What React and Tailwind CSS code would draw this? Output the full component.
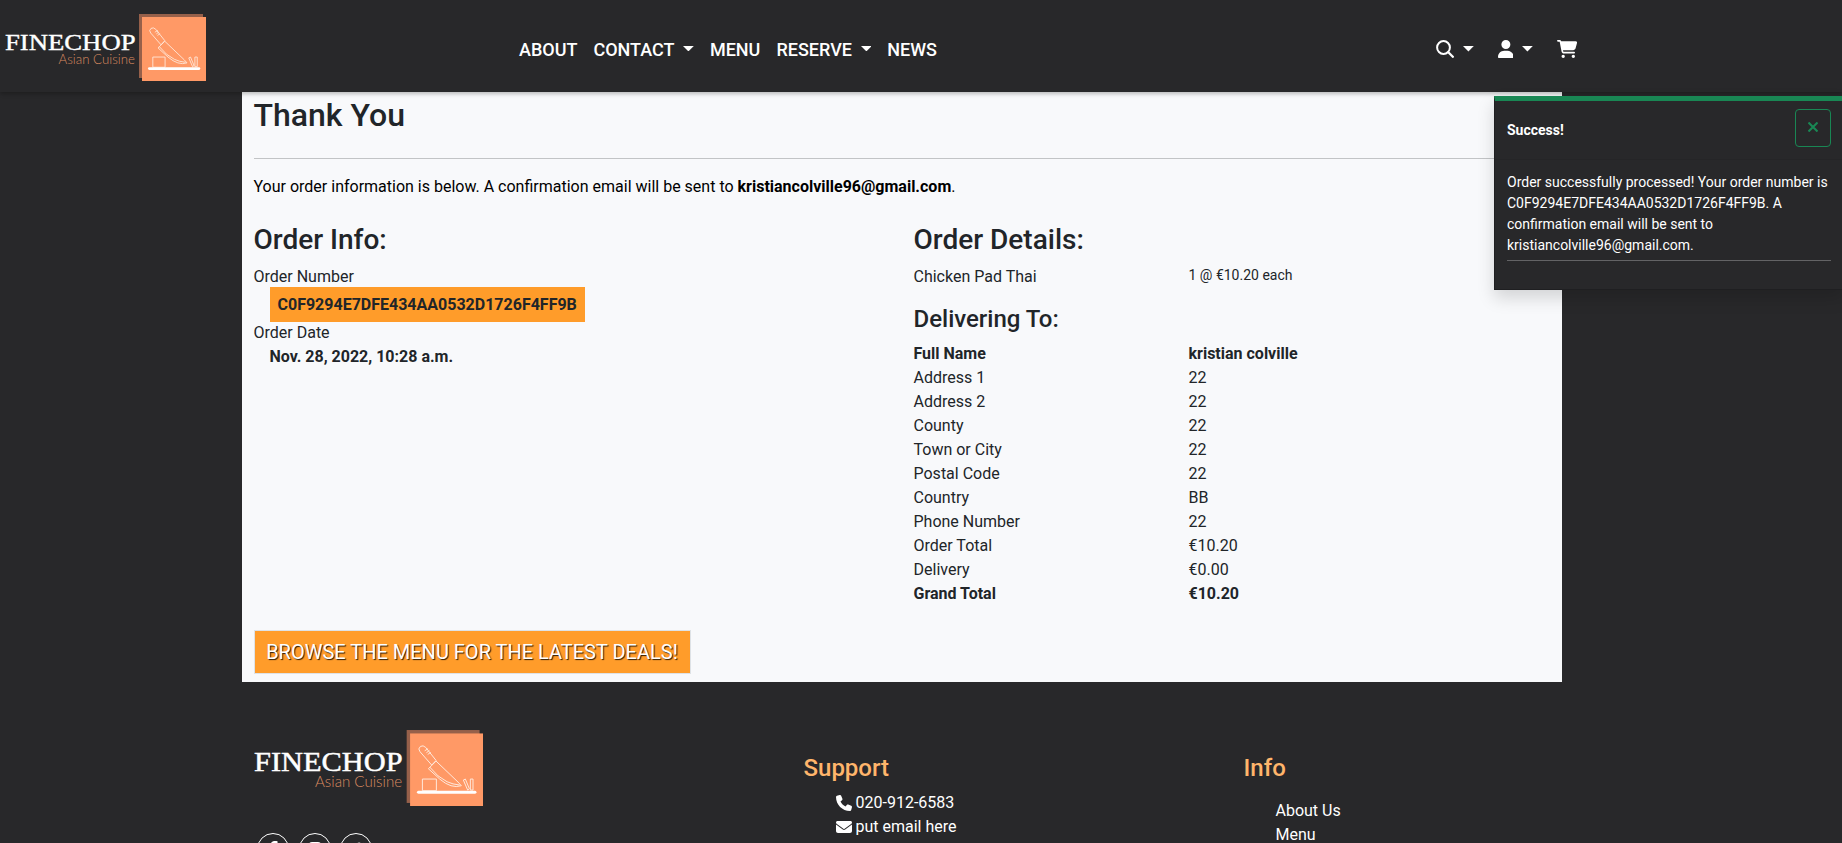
import React from "react";
import {
  FaUser,
  FaCartShopping,
  FaPhone,
  FaEnvelope,
  FaFacebookF,
  FaInstagram,
  FaTwitter,
} from "react-icons/fa6";

function Logo({ className }) {
  return (
    <svg viewBox="0 0 201 67" className={className} role="img" aria-label="Finechop Asian Cuisine">
      <text x="0" y="36" textLength="130.5" lengthAdjust="spacingAndGlyphs" fill="#fff" stroke="#fff" strokeWidth="0.4" fontSize="24" fontFamily="'Liberation Serif', serif">FINECHOP</text>
      <text x="53.5" y="50" textLength="76.5" lengthAdjust="spacingAndGlyphs" fill="#d98a60" fontSize="13.2" fontWeight="300" fontFamily="Lato, sans-serif">Asian Cuisine</text>
      <rect x="134" y="0" width="64" height="64" fill="#96604a" />
      <rect x="137" y="3" width="64" height="64" fill="#ff9966" />
      <svg x="137" y="3" width="64" height="64" viewBox="30 26 219 219" fill="none" stroke="#ffe9dc" strokeWidth="3" strokeLinejoin="round">
        <path d="M60 81 Q52 72 61 65 Q69 60 77 68 L108 107 L95 121 Z" />
        <path d="M74 78 L84 72 M79 84 L88 77 M83 89 L92 83" />
        <path d="M108 109 L174 172 L184 183 Q154 193 119 163 L85 132 Z" />
        <path d="M89 127 Q113 158 141 171 Q158 179 179 181" />
        <rect x="67" y="163" width="42" height="35" />
        <path d="M190 166 L196 163 L208 192 L203 196 Z M211 163 H219 V196 H211 Z" />
        <path d="M55 202.500 H225" stroke="#fff" strokeWidth="9" strokeLinecap="round" />
      </svg>
    </svg>
  );
}

function SearchIcon() {
  return (
    <svg viewBox="0 0 18 18" className="h-[18px] w-[18px]" fill="none" stroke="currentColor" strokeLinecap="round">
      <circle cx="7.5" cy="7.5" r="6.400" strokeWidth="2" />
      <path d="M12.300 12.300 L16.800 16.800" strokeWidth="2.300" />
    </svg>
  );
}

function Caret() {
  return (
    <svg viewBox="0 0 10.8 5.4" className="ml-[8.6px] inline-block h-[5.4px] w-[10.8px] align-[4.5px]" fill="currentColor">
      <path d="M0 0 H10.8 L5.4 5.4 Z" />
    </svg>
  );
}

const links = [
  { label: "About" },
  { label: "Contact", menu: true },
  { label: "Menu" },
  { label: "Reserve", menu: true },
  { label: "News" },
];

const delivery = [
  ["Full Name", "kristian colville", true],
  ["Address 1", "22"],
  ["Address 2", "22"],
  ["County", "22"],
  ["Town or City", "22"],
  ["Postal Code", "22"],
  ["Country", "BB"],
  ["Phone Number", "22"],
  ["Order Total", "€10.20"],
  ["Delivery", "€0.00"],
  ["Grand Total", "€10.20", true],
];

function Header() {
  return (
    <header className="relative z-10 flex h-[92px] items-center bg-[#28282a] text-[18px] text-white shadow-[0_2px_4px_rgba(0,0,0,0.25)]">
      <div className="w-[511px] pt-[3px] pl-[5px]">
        <Logo className="h-[67px] w-[201px]" />
      </div>
      <nav className="mt-[7px] flex font-medium uppercase">
        {links.map((l) => (
          <a key={l.label} className="px-2 leading-[26px]">
            {l.label}
            {l.menu && <Caret />}
          </a>
        ))}
      </nav>
      <div className="mt-[6px] ml-auto flex items-center pr-[265px]">
        <a className="flex items-center">
          <SearchIcon />
          <Caret />
        </a>
        <a className="ml-6 flex items-center">
          <FaUser className="h-[18px] w-[15.75px]" />
          <Caret />
        </a>
        <a className="ml-6">
          <FaCartShopping className="h-[18px] w-[20.25px]" />
        </a>
      </div>
    </header>
  );
}

function Toast() {
  return (
    <aside className="absolute top-[96px] left-[1494px] z-20 h-[194px] w-[350px] border border-t-[5px] border-black/20 border-t-[#198754] bg-[#28282a] text-[14px] leading-[21px] text-white shadow-[0_8px_16px_rgba(0,0,0,0.15)]">
      <div className="flex h-[59px] items-center justify-between border-b border-black/5 px-3">
        <strong className="mt-px font-bold">Success!</strong>
        <button className="-mt-[4px] flex h-[38px] w-9 items-center justify-center rounded-[4px] border border-[#198754] pb-0.5 text-[#198754]">
          <svg viewBox="0 0 10 10" className="h-[10px] w-[10px]" stroke="currentColor" strokeWidth="2.1">
            <path d="M0.500 0.500 L9.500 9.500 M9.500 0.500 L0.500 9.500" />
          </svg>
        </button>
      </div>
      <div className="px-3 pt-3">
        <p>
          Order successfully processed! Your order number is C0F9294E7DFE434AA0532D1726F4FF9B. A confirmation email will be sent to kristiancolville96@gmail.com.
        </p>
        <hr className="mt-1 border-[#636365]" />
      </div>
    </aside>
  );
}

function Order() {
  return (
    <main className="ml-[241.5px] h-[590px] w-[1320px] bg-[#f8f9fb] px-3 pt-1 text-[#212529]">
      <h2 className="text-[32px] leading-[38.4px] font-medium">Thank You</h2>
      <hr className="mt-6 border-[#c2c4c6]" />
      <p className="mt-4 text-black">
        Your order information is below. A confirmation email will be sent to <strong className="font-bold">kristiancolville96@gmail.com</strong>.
      </p>
      <div className="mt-6 grid h-[407px] grid-cols-[660px_1fr]">
        <section>
          <h3 className="text-[28px] leading-[33.6px] font-medium">Order Info:</h3>
          <div className="mt-2">Order Number</div>
          <div className="-mt-[2px] ml-4 flex h-[35px] w-[315px] items-center bg-[#ff9c2a] pl-2 font-bold">C0F9294E7DFE434AA0532D1726F4FF9B</div>
          <div className="-mt-px">Order Date</div>
          <div className="ml-4 font-bold">Nov. 28, 2022, 10:28 a.m.</div>
        </section>
        <section>
          <h3 className="text-[28px] leading-[33.6px] font-medium">Order Details:</h3>
          <div className="mt-2 grid grid-cols-[275px_1fr]">
            <span>Chicken Pad Thai</span>
            <span className="text-[14px] leading-[21px]">1 @ €10.20 each</span>
          </div>
          <h4 className="mt-4 mb-2 text-[24px] leading-[28.8px] font-medium">Delivering To:</h4>
          {delivery.map(([k, v, bold]) => (
            <div key={k} className={bold ? "grid grid-cols-[275px_1fr] font-bold" : "grid grid-cols-[275px_1fr]"}>
              <span>{k}</span>
              <span>{v}</span>
            </div>
          ))}
        </section>
      </div>
      <a className="inline-flex h-11 w-[437px] items-center justify-center border border-[#dee2e6] bg-[#ff9c2a] text-[20px] whitespace-nowrap text-white uppercase [text-shadow:1px_1px_1px_rgba(0,0,0,0.85)]">
        Browse the menu for the latest deals!
      </a>
    </main>
  );
}

function Footer() {
  return (
    <footer className="grid grid-cols-[550px_440px_1fr] pl-[253.5px] text-white">
      <div className="pt-12">
        <Logo className="h-[76.400px] w-[229px]" />
        <div className="mt-[27px] flex gap-[9.500px] pl-[3.5px]">
          {[FaFacebookF, FaInstagram, FaTwitter].map((Icon, i) => (
            <a key={i} className="flex h-8 w-8 shrink-0 items-center justify-center rounded-full border border-white">
              <Icon className="h-4 w-4" />
            </a>
          ))}
        </div>
      </div>
      <div className="pt-[72px]">
        <h4 className="text-[24px] leading-[28.8px] font-medium text-[#ffb56b]">Support</h4>
        <ul className="mt-2 pl-8">
          <li className="flex items-center gap-1">
            <FaPhone className="h-4 w-4" />
            020-912-6583
          </li>
          <li className="flex items-center gap-1">
            <FaEnvelope className="h-4 w-4" />
            put email here
          </li>
        </ul>
      </div>
      <div className="pt-[72px]">
        <h4 className="text-[24px] leading-[28.8px] font-medium text-[#ffb56b]">Info</h4>
        <ul className="mt-4 pl-8">
          <li>About Us</li>
          <li>Menu</li>
        </ul>
      </div>
    </footer>
  );
}

export default function App() {
  return (
    <div className="relative h-[843px] w-[1842px] overflow-hidden bg-[#28282a] font-[Roboto,sans-serif] text-[16px] leading-6">
      <Header />
      <Order />
      <Footer />
      <Toast />
    </div>
  );
}
